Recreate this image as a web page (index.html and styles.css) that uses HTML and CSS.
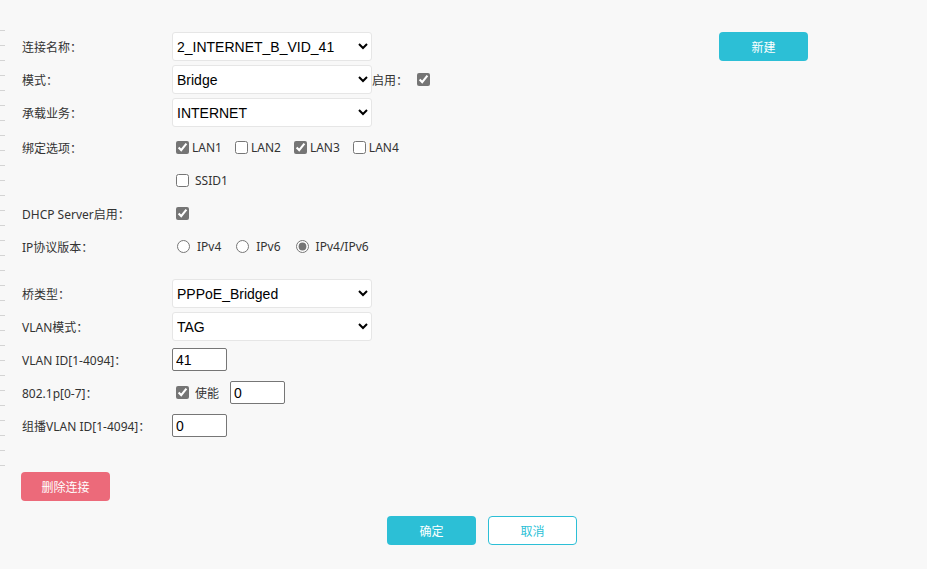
FILE: index.html
```html
<!DOCTYPE html>
<html lang="zh-CN">
<head>
<meta charset="utf-8">
<title>连接设置</title>
<link rel="stylesheet" href="styles.css">
</head>
<body>
<div class="page">
  <div class="ruler"></div>
  <div class="content">
    <form class="form">
      <div class="row">
        <span class="label">连接名称：</span>
        <select class="sel"><option>2_INTERNET_B_VID_41</option></select>
        <button type="button" class="btn btn-primary btn-new">新建</button>
      </div>
      <div class="row">
        <span class="label">模式：</span>
        <select class="sel"><option>Bridge</option></select>
        <span class="inline-label">启用：</span>
        <input type="checkbox" class="chk chk-enable" checked>
      </div>
      <div class="row">
        <span class="label">承载业务：</span>
        <select class="sel"><option>INTERNET</option></select>
      </div>
      <div class="group">
        <div class="row">
          <span class="label">绑定选项：</span>
          <label class="opt"><input type="checkbox" class="chk" checked>LAN1</label>
          <label class="opt"><input type="checkbox" class="chk">LAN2</label>
          <label class="opt"><input type="checkbox" class="chk" checked>LAN3</label>
          <label class="opt"><input type="checkbox" class="chk">LAN4</label>
        </div>
        <div class="row">
          <span class="label"></span>
          <label class="opt"><input type="checkbox" class="chk"><span class="opt-text">SSID1</span></label>
        </div>
        <div class="row">
          <span class="label">DHCP Server启用：</span>
          <input type="checkbox" class="chk" checked>
        </div>
        <div class="row">
          <span class="label">IP协议版本：</span>
          <label class="opt opt-radio"><input type="radio" name="ipv" class="rad"><span class="opt-text">IPv4</span></label>
          <label class="opt opt-radio"><input type="radio" name="ipv" class="rad"><span class="opt-text">IPv6</span></label>
          <label class="opt opt-radio"><input type="radio" name="ipv" class="rad" checked><span class="opt-text">IPv4/IPv6</span></label>
        </div>
      </div>
      <div class="spacer"></div>
      <div class="row">
        <span class="label">桥类型：</span>
        <select class="sel"><option>PPPoE_Bridged</option></select>
      </div>
      <div class="row">
        <span class="label">VLAN模式：</span>
        <select class="sel"><option>TAG</option></select>
      </div>
      <div class="row">
        <span class="label">VLAN ID[1-4094]：</span>
        <input type="text" class="txt" value="41">
      </div>
      <div class="row">
        <span class="label">802.1p[0-7]：</span>
        <label class="opt"><input type="checkbox" class="chk" checked><span class="opt-text">使能</span></label>
        <input type="text" class="txt txt-pri" value="0">
      </div>
      <div class="row">
        <span class="label">组播VLAN ID[1-4094]：</span>
        <input type="text" class="txt" value="0">
      </div>
      <div class="row-delete">
        <button type="button" class="btn btn-danger">删除连接</button>
      </div>
      <div class="footer">
        <button type="button" class="btn btn-primary">确定</button>
        <button type="button" class="btn btn-outline">取消</button>
      </div>
    </form>
  </div>
</div>
</body>
</html>
```
FILE: styles.css
```css
html, body {
  margin: 0;
  padding: 0;
  background: #f8f8f8;
}

body {
  font-family: "Noto Sans", "Noto Sans CJK SC", sans-serif;
  font-size: 12px;
  color: #333;
  height: 569px;
  overflow: hidden;
}

.page {
  display: flex;
  align-items: flex-start;
}

.ruler {
  flex: none;
  width: 5px;
  height: 436px;
  margin-top: 30px;
  background: repeating-linear-gradient(to bottom, #d4d4d4 0 1px, transparent 1px 15px);
}

.content {
  padding: 30px 0 0 17px;
  width: 786px;
}

.form {
  margin: 0;
}

.row {
  display: flex;
  align-items: center;
  height: 33px;
}

.group {
  padding-top: 2px;
}

.spacer {
  height: 14px;
}

.label {
  flex: none;
  width: 150px;
  font-size: 12px;
  color: #333;
  white-space: nowrap;
}

.sel {
  flex: none;
  width: 200px;
  height: 29px;
  border: 1px solid #e6e6e6;
  border-radius: 3px;
  background: #fff;
  font-family: "Liberation Sans", Arial, sans-serif;
  font-size: 14px;
  color: #000;
  padding: 0;
  outline: none;
}

.inline-label {
  margin-left: 0;
  font-size: 12px;
  color: #333;
}

.chk {
  width: 13px;
  height: 13px;
  margin: 3px 3px 3px 4px;
  accent-color: #757575;
}

.chk-enable {
  margin-left: 9px;
}

.rad {
  width: 13px;
  height: 13px;
  margin: 0 3px 0 5px;
  accent-color: #757575;
}

.opt {
  display: inline-flex;
  align-items: center;
  margin-right: 9px;
  font-size: 12px;
  color: #333;
  white-space: nowrap;
}

.opt-text {
  margin-left: 3px;
}

.opt-radio {
  margin-right: 10px;
}

.opt-radio .opt-text {
  margin-left: 4px;
}

.txt {
  box-sizing: border-box;
  width: 55px;
  height: 23px;
  border: 1px solid #767676;
  border-radius: 2px;
  padding: 0 3px;
  background: #fff;
  font-family: "Liberation Sans", Arial, sans-serif;
  font-size: 14px;
  color: #000;
  outline: none;
}

.txt-pri {
  margin-left: 2px;
}

.btn {
  box-sizing: border-box;
  width: 89px;
  height: 29px;
  border-radius: 4px;
  border: 1px solid transparent;
  font-family: "Noto Sans CJK SC", sans-serif;
  font-size: 12px;
  cursor: pointer;
  padding: 0;
}

.btn-primary {
  background: #2cbfd6;
  color: #fff;
}

.btn-new {
  margin-left: auto;
}

.btn-danger {
  background: #ec6a7a;
  color: #fff;
}

.btn-outline {
  background: #fff;
  border-color: #2cbfd6;
  color: #2cbfd6;
}

.row-delete {
  margin-top: 30px;
  margin-left: -1px;
  display: flex;
}

.footer {
  display: flex;
  gap: 12px;
  margin-top: 15px;
  padding-left: 365px;
}
```
